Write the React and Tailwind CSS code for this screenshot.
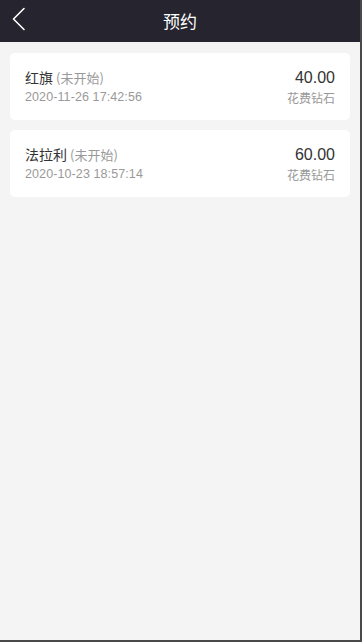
const records = [
  { name: "红旗", status: "(未开始)", time: "2020-11-26 17:42:56", cost: "40.00" },
  { name: "法拉利", status: "(未开始)", time: "2020-10-23 18:57:14", cost: "60.00" },
]

const App = () => {
  return (
    <div
      className="w-[362px] h-[642px] bg-[#f4f4f4] border-r-2 border-b-2 border-[#4a4a4a] flex flex-col overflow-hidden"
      style={{ fontFamily: '"Noto Sans CJK SC", "Noto Sans", sans-serif' }}
    >
      <div className="h-[42px] bg-[#26252f] flex items-center relative shrink-0">
        {/* back arrow */}
        <svg className="absolute left-0 top-0" width="40" height="42" viewBox="0 0 40 42">
          <polyline points="24,8.5 13.5,19 24,29.5" fill="none" stroke="#fff" strokeWidth="1.6" strokeLinecap="round" strokeLinejoin="round" />
        </svg>
        <div className="flex-1 text-center text-white text-[17px]">预约</div>
      </div>
      <div className="px-[10px] pt-[11px] flex flex-col gap-[10px]">
        {records.map((r) => (
          <div key={r.time} className="bg-white rounded-[5px] h-[67px] px-[15px] flex justify-between items-center">
            <div className="flex flex-col">
              <div className="text-[14px] text-[#333] leading-[20px]">
                {r.name}
                <span className="text-[13px] text-[#999] ml-[3px]">{r.status}</span>
              </div>
              <div className="text-[12.5px] text-[#999] leading-[18px] tracking-[0.1px]" style={{ fontFamily: '"Liberation Sans", sans-serif' }}>
                {r.time}
              </div>
            </div>
            <div className="flex flex-col items-end">
              <div className="text-[16px] text-[#333] leading-[22px]" style={{ fontFamily: '"Liberation Sans", sans-serif' }}>
                {r.cost}
              </div>
              <div className="text-[12px] text-[#999] leading-[18px]">花费钻石</div>
            </div>
          </div>
        ))}
      </div>
    </div>
  )
}

export default App
